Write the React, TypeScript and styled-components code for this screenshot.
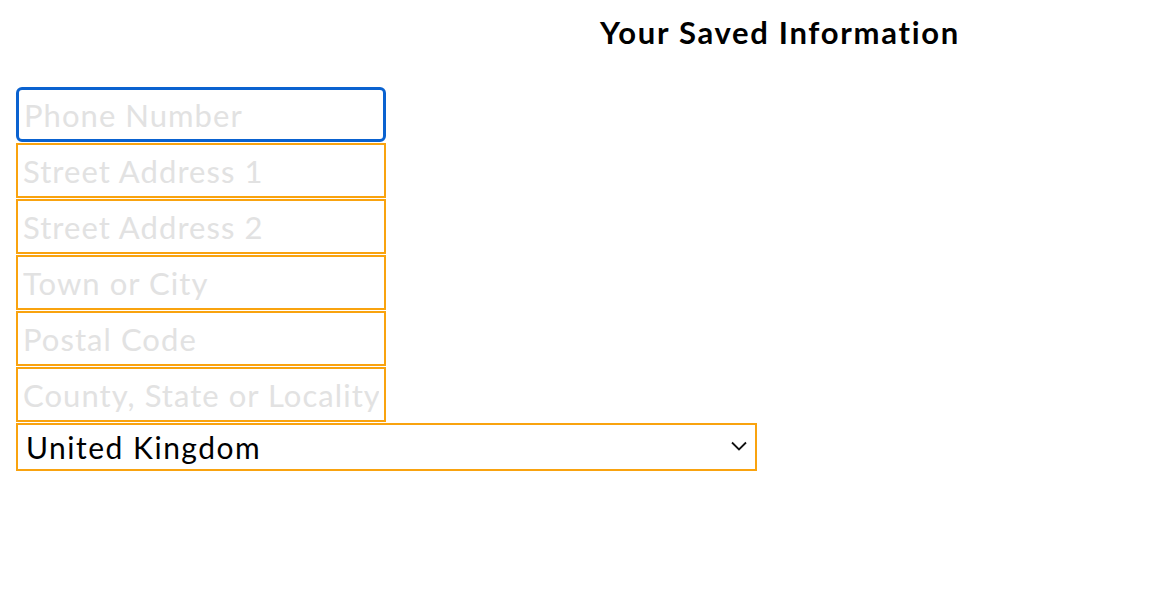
import styled, { createGlobalStyle } from 'styled-components';

const GlobalStyle = createGlobalStyle`
  body {
    margin: 0;
    background: #fff;
    font-family: Lato, "Noto Sans", sans-serif;
  }
`;

const Page = styled.div`
  padding: 14px 16px 0;
`;

const Title = styled.h1`
  margin: 0 0 37px;
  padding-left: 402px;
  text-align: center;
  font-size: 31px;
  font-weight: 700;
  letter-spacing: 1.7px;
  color: #000;
  line-height: 36px;
`;

const Form = styled.form`
  display: flex;
  flex-direction: column;
  align-items: flex-start;
  gap: 1px;
`;

const Field = styled.input<{ $focused?: boolean }>`
  box-sizing: border-box;
  width: 370px;
  height: 55px;
  margin: 0;
  padding: 0 5px;
  font-family: inherit;
  font-size: 31px;
  letter-spacing: 1.05px;
  color: #000;
  background: #fff;
  border: ${(p) => (p.$focused ? '3px solid #0a62d0' : '2px solid #f9a30f')};
  border-radius: ${(p) => (p.$focused ? '6px' : '0')};
  outline: none;
  &::placeholder {
    color: #e2e2e2;
  }
`;

const SelectWrap = styled.div`
  position: relative;
  width: 741px;
`;

const Select = styled.select`
  box-sizing: border-box;
  width: 100%;
  height: 48px;
  margin: 0;
  padding: 0 8px;
  font-family: inherit;
  font-size: 30px;
  letter-spacing: 1.5px;
  color: #000;
  background: #fff;
  border: 2px solid #f9a30f;
  border-radius: 0;
  appearance: none;
  outline: none;
`;

const Chevron = styled.svg`
  position: absolute;
  right: 10px;
  top: 18px;
  width: 16px;
  height: 10px;
  pointer-events: none;
`;

const fields = [
  'Street Address 1',
  'Street Address 2',
  'Town or City',
  'Postal Code',
  'County, State or Locality',
];

export default function App() {
  return (
    <>
      <GlobalStyle />
      <Page>
        <Title>Your Saved Information</Title>
        <Form>
          <Field $focused placeholder="Phone Number" />
          {fields.map((f) => (
            <Field key={f} placeholder={f} />
          ))}
          <SelectWrap>
            <Select defaultValue="GB">
              <option value="GB">United Kingdom</option>
              <option value="US">United States</option>
            </Select>
            <Chevron viewBox="0 0 16 10">
              <path d="M1 1.5l7 7 7-7" fill="none" stroke="#111" strokeWidth="1.8" />
            </Chevron>
          </SelectWrap>
        </Form>
      </Page>
    </>
  );
}
